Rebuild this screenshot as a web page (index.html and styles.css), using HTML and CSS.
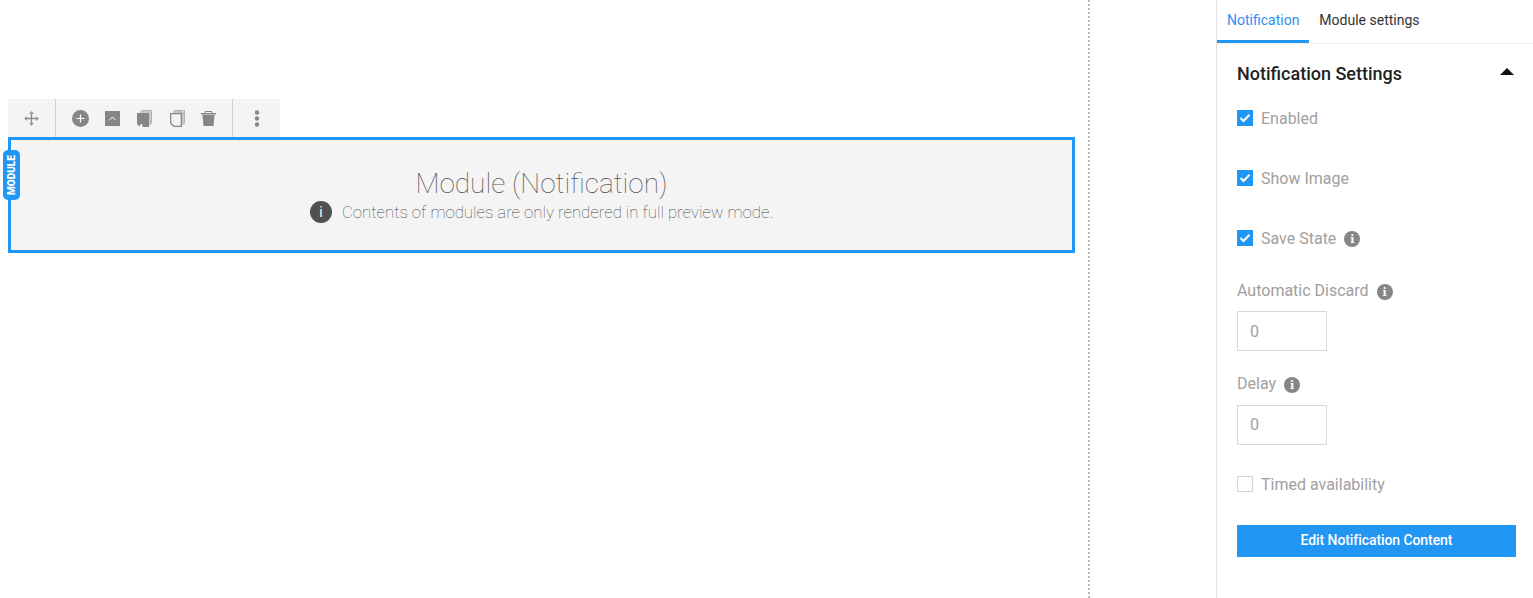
FILE: index.html
```html
<!DOCTYPE html>
<html lang="en">
<head>
<meta charset="utf-8">
<title>Module (Notification)</title>
<link rel="stylesheet" href="styles.css">
</head>
<body>
<div class="app">
  <main class="canvas">
    <div class="toolbar">
      <div class="tool-group tool-move">
        <svg class="ico" width="15" height="15" viewBox="0 0 15 15"><path d="M7.500 1.500v12M1.500 7.500h12" stroke="#8a8a8a" stroke-width="1.300" fill="none"/><path d="M7.500 0 10 3H5zM7.500 15 5 12h5zM0 7.500 3 5v5zM15 7.500 12 10V5z" fill="#9a9a9a"/></svg>
      </div>
      <div class="tool-group tool-main">
        <svg class="ico" width="17" height="17" viewBox="0 0 17 17"><circle cx="8.500" cy="8.500" r="8.500" fill="#868686"/><path d="M8.500 4.500v8M4.500 8.500h8" stroke="#fff" stroke-width="1.200"/></svg>
        <svg class="ico" width="15" height="15" viewBox="0 0 15 15"><rect width="15" height="15" fill="#868686"/><path d="M4.300 9.300 7.500 6l3.200 3.300" fill="none" stroke="#fff" stroke-width="1"/></svg>
        <svg class="ico ico-copy" width="15" height="17" viewBox="0 0 15 17"><path d="M4.500.5h10v13" fill="none" stroke="#b0b0b0"/><path d="M3 2h10v13" fill="none" stroke="#9a9a9a"/><path d="M0 3h12v14H3l-3-3z" fill="#868686"/><path d="M3 14.500h2.500V17H3z" fill="#fff"/></svg>
        <svg class="ico ico-paste" width="15" height="17" viewBox="0 0 15 17"><path d="M4.500.5h10v13" fill="none" stroke="#b0b0b0"/><path d="M3 2h10v13" fill="none" stroke="#9a9a9a"/><path d="M.7 3.700h10.600v12.600H4L.7 13.300z" fill="#f4f4f4" stroke="#868686" stroke-width="1.300"/></svg>
        <svg class="ico" width="15" height="15" viewBox="0 0 15 15"><path d="M0 2h15v1.500H0z" fill="#868686"/><path d="M4 2V.5h7V2" fill="none" stroke="#868686"/><path d="M1.500 4h12l-1 11h-10z" fill="#868686"/></svg>
      </div>
      <div class="tool-group tool-more">
        <svg class="ico" width="6" height="17" viewBox="0 0 6 17"><circle cx="3" cy="2.500" r="2.200" fill="#868686"/><circle cx="3" cy="8.500" r="2.200" fill="#868686"/><circle cx="3" cy="14.500" r="2.200" fill="#868686"/></svg>
      </div>
    </div>
    <section class="module">
      <span class="module-badge">MODULE</span>
      <h1 class="module-title">Module (Notification)</h1>
      <p class="module-note">
        <span class="note-icon">i</span>
        <span>Contents of modules are only rendered in full preview mode.</span>
      </p>
    </section>
  </main>
  <aside class="panel">
    <nav class="tabs">
      <span class="tab tab-active">Notification</span>
      <span class="tab">Module settings</span>
    </nav>
    <div class="panel-body">
      <div class="section-head">
        <h2 class="section-title">Notification Settings</h2>
        <span class="caret"></span>
      </div>
      <div class="check-row row-enabled">
        <span class="check on"><svg width="12" height="10" viewBox="0 0 12 10"><path d="M1.500 5 4.500 8 10.500 1.800" fill="none" stroke="#fff" stroke-width="2"/></svg></span>
        <span class="field-label">Enabled</span>
      </div>
      <div class="check-row row-image">
        <span class="check on"><svg width="12" height="10" viewBox="0 0 12 10"><path d="M1.500 5 4.500 8 10.500 1.800" fill="none" stroke="#fff" stroke-width="2"/></svg></span>
        <span class="field-label">Show Image</span>
      </div>
      <div class="check-row row-state">
        <span class="check on"><svg width="12" height="10" viewBox="0 0 12 10"><path d="M1.500 5 4.500 8 10.500 1.800" fill="none" stroke="#fff" stroke-width="2"/></svg></span>
        <span class="field-label">Save State</span>
        <span class="hint">i</span>
      </div>
      <div class="field field-discard">
        <div class="field-head"><span class="field-label">Automatic Discard</span><span class="hint">i</span></div>
        <div class="input">0</div>
      </div>
      <div class="field field-delay">
        <div class="field-head"><span class="field-label">Delay</span><span class="hint">i</span></div>
        <div class="input">0</div>
      </div>
      <div class="check-row row-timed">
        <span class="check"></span>
        <span class="field-label">Timed availability</span>
      </div>
      <button class="primary" type="button">Edit Notification Content</button>
    </div>
  </aside>
</div>
</body>
</html>
```
FILE: styles.css
```css
* { box-sizing: border-box; }
html, body { margin: 0; padding: 0; height: 598px; overflow: hidden; background: #fff; }
body { font-family: Roboto, "Liberation Sans", sans-serif; color: #111; }
.app { display: flex; height: 598px; }

.canvas {
  width: 1090px;
  flex: none;
  padding: 99px 13px 0 8px;
  border-right: 2px dotted #b8b8b8;
}
.toolbar { display: flex; width: 272px; height: 38px; background: #f4f4f4; }
.tool-group { display: flex; align-items: center; height: 100%; }
.tool-move { width: 48px; padding-left: 16px; border-right: 1px solid #cfcfcf; }
.tool-main { width: 177px; padding-left: 16px; gap: 16px; border-right: 1px solid #cfcfcf; }
.tool-more { flex: 1; justify-content: center; }
.ico { display: block; flex: none; }
.ico-copy { margin-left: 1px; }
.ico-paste { margin-left: 2px; }

.module {
  position: relative;
  height: 116px;
  background: #f4f4f4;
  border: 3px solid #2196f3;
  text-align: center;
  padding-top: 28px;
}
.module-badge {
  position: absolute;
  left: -8px;
  top: 10px;
  width: 17px;
  height: 50px;
  border-radius: 5px;
  background: #2196f3;
  color: #fff;
  font-size: 10px;
  font-weight: 900;
  line-height: 17px;
  text-align: center;
  writing-mode: vertical-rl;
  transform: rotate(180deg);
}
.module-title { margin: 0; font-size: 28px; font-weight: 100; line-height: 32px; color: #555; }
.module-note {
  display: flex;
  justify-content: center;
  align-items: center;
  gap: 10px;
  margin: 1px 0 0;
  font-size: 16.8px;
  font-weight: 100;
  line-height: 22px;
  color: #444;
  height: 22px;
}
.note-icon {
  display: flex;
  align-items: center;
  justify-content: center;
  width: 22px;
  height: 22px;
  border-radius: 50%;
  background: #505050;
  color: #fff;
  font-size: 14px;
  font-weight: 400;
}

.panel { width: 317px; flex: none; margin-left: 126px; border-left: 1px solid #e3e3e3; }
.tabs { display: flex; height: 44px; border-bottom: 1px solid #eee; }
.tab { padding: 12px 10px 0; height: 43px; font-size: 14px; line-height: 16px; color: #333; }
.tab-active { color: #2e8ff0; border-bottom: 3px solid #2196f3; }
.panel-body { padding: 0 17px 0 20px; }
.section-head { display: flex; justify-content: space-between; align-items: center; height: 60px; }
.section-title { margin: 0; font-size: 18px; font-weight: 500; line-height: 24px; color: #222; }
.caret {
  width: 0;
  height: 0;
  margin-right: 2px;
  margin-top: -5px;
  border-left: 7px solid transparent;
  border-right: 7px solid transparent;
  border-bottom: 7px solid #111;
}
.check-row { display: flex; align-items: center; height: 20px; }
.check-row .field-label { position: relative; top: 1px; }
.row-enabled { margin-top: 4px; }
.row-image, .row-state { margin-top: 40px; }
.check {
  display: flex;
  align-items: center;
  justify-content: center;
  width: 16px;
  height: 16px;
  margin-right: 8px;
  border: 1px solid #d4d4d4;
  background: #fff;
}
.check.on { background: #2196f3; border-color: #2196f3; }
.field-label { font-size: 16px; line-height: 20px; color: #a0a0a0; }
.hint {
  display: flex;
  align-items: center;
  justify-content: center;
  width: 16px;
  height: 16px;
  margin-left: 8px;
  border-radius: 50%;
  background: #868686;
  color: #fff;
  font-family: "DejaVu Serif", serif;
  font-size: 11px;
  font-weight: 700;
  position: relative;
  top: 1px;
}
.field-head { display: flex; align-items: center; height: 20px; }
.field-discard { margin-top: 33px; }
.field-delay { margin-top: 23px; }
.input {
  width: 90px;
  height: 40px;
  margin-top: 10px;
  padding-left: 12px;
  border: 1px solid #d9d9d9;
  font-size: 16px;
  line-height: 39px;
  color: #a0a0a0;
}
.field-delay .input { margin-top: 11px; line-height: 38px; }
.row-timed { margin-top: 29px; }
.primary {
  display: block;
  width: 279px;
  height: 32px;
  margin-top: 31px;
  padding: 0 0 2px;
  border: 0;
  background: #2196f3;
  color: #fff;
  font-family: inherit;
  font-size: 14px;
  font-weight: 500;
  letter-spacing: -0.08px;
}
```
